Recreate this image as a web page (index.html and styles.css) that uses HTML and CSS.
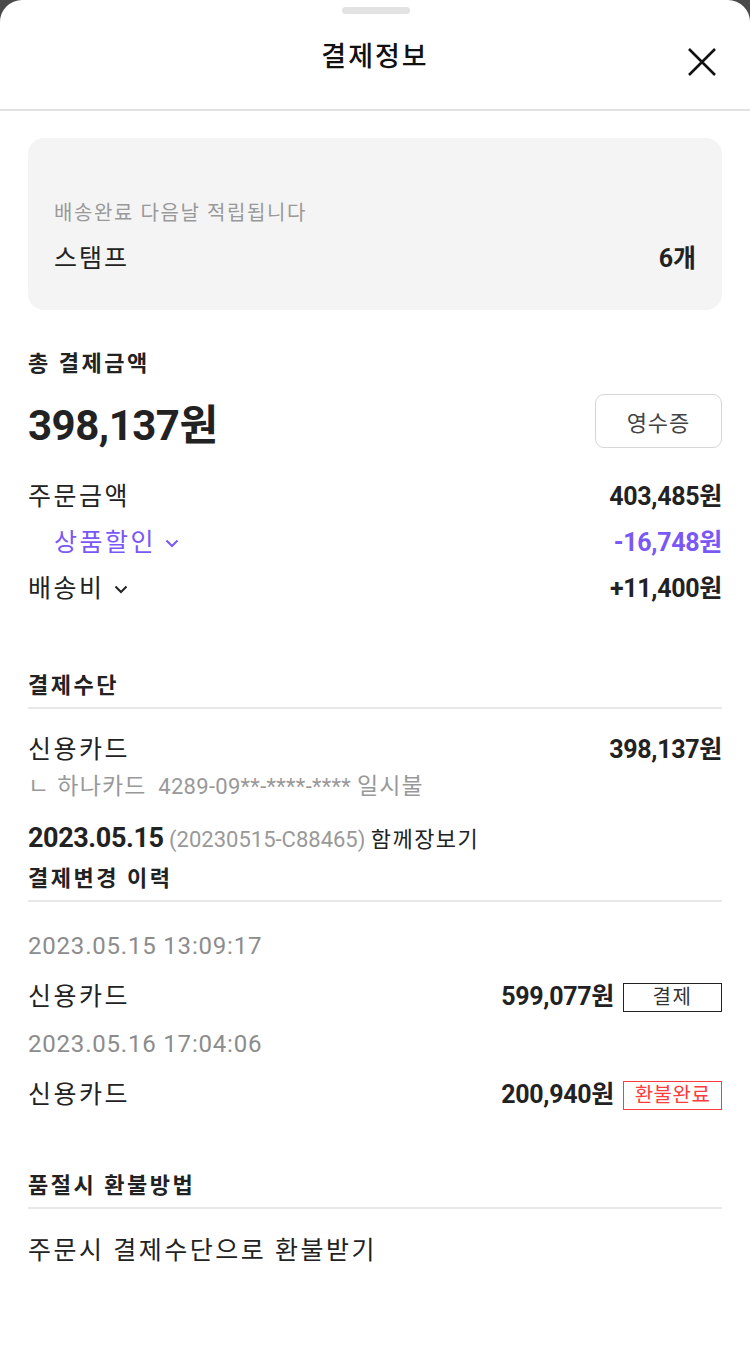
FILE: index.html
```html
<!DOCTYPE html>
<html lang="ko">
<head>
    <meta charset="UTF-8">
    <meta name="viewport" content="width=device-width, initial-scale=1.0">
    <title>결제정보</title>
    <link rel="stylesheet" href="styles.css">
</head>
<body>
    <div class="sheet">
        <div class="header">
            <div class="handle"></div>
            <h1 class="title">결제정보</h1>
            <button class="close" aria-label="닫기">
                <svg width="30" height="30" viewBox="0 0 30 30"><path d="M2 2 L28 28 M28 2 L2 28" stroke="#111" stroke-width="2.6" fill="none"/></svg>
            </button>
        </div>

        <div class="content">
            <div class="stamp-card">
                <p class="stamp-note">배송완료 다음날 적립됩니다</p>
                <div class="stamp-row">
                    <span>스탬프</span>
                    <strong>6개</strong>
                </div>
            </div>

            <h2 class="label">총 결제금액</h2>
            <div class="total-row">
                <span class="total">398,137원</span>
                <button class="receipt">영수증</button>
            </div>

            <div class="row first">
                <span class="name">주문금액</span>
                <strong>403,485원</strong>
            </div>
            <div class="row discount">
                <span class="name">상품할인<svg class="chev" width="14" height="9" viewBox="0 0 14 9"><path d="M1.5 1.5 L7 7 L12.5 1.5" stroke="currentColor" stroke-width="2" fill="none"/></svg></span>
                <strong>-16,748원</strong>
            </div>
            <div class="row">
                <span class="name">배송비<svg class="chev" width="14" height="9" viewBox="0 0 14 9"><path d="M1.5 1.5 L7 7 L12.5 1.5" stroke="currentColor" stroke-width="2" fill="none"/></svg></span>
                <strong>+11,400원</strong>
            </div>

            <h2 class="section-title pay-title">결제수단</h2>
            <div class="row card-row">
                <span class="name">신용카드</span>
                <strong>398,137원</strong>
            </div>
            <p class="card-detail"><span class="ko">ㄴ 하나카드</span>&nbsp; 4289-09**-****-**** <span class="ko">일시불</span></p>
            <p class="order-line"><strong>2023.05.15</strong> <span class="order-no">(20230515-C88465)</span> <span class="order-type">함께장보기</span></p>

            <h2 class="section-title history-title">결제변경 이력</h2>
            <p class="stamp-time">2023.05.15 13:09:17</p>
            <div class="row hist-row">
                <span class="name">신용카드</span>
                <div class="hist-amount">
                    <strong>599,077원</strong>
                    <span class="badge">결제</span>
                </div>
            </div>
            <p class="stamp-time next">2023.05.16 17:04:06</p>
            <div class="row hist-row">
                <span class="name">신용카드</span>
                <div class="hist-amount">
                    <strong>200,940원</strong>
                    <span class="badge refund">환불완료</span>
                </div>
            </div>

            <h2 class="section-title refund-title">품절시 환불방법</h2>
            <p class="refund-way">주문시 결제수단으로 환불받기</p>
        </div>
    </div>
</body>
</html>
```

FILE: styles.css
```css
body {
    margin: 0;
    background-color: #4a4a4a;
    font-family: Roboto, "Noto Sans CJK KR", sans-serif;
    color: #222;
}

.sheet {
    background-color: #fff;
    border-radius: 22px 22px 0 0;
    min-height: 1345px;
}

.header {
    position: relative;
    height: 109px;
    border-bottom: 2px solid #e2e2e2;
    text-align: center;
}

.handle {
    position: absolute;
    top: 7px;
    left: 342px;
    width: 68px;
    height: 7px;
    border-radius: 4px;
    background-color: #e2e2e2;
}

.title {
    margin: 0;
    padding-top: 40px;
    font-size: 27px;
    line-height: 34px;
    letter-spacing: 2px;
    font-weight: 500;
    color: #111;
}

.close {
    position: absolute;
    top: 47px;
    right: 33px;
    padding: 0;
    border: 0;
    background: none;
    width: 30px;
    height: 30px;
}

.content {
    padding: 0 28px;
}

p {
    margin: 0;
}

.stamp-card {
    margin-top: 27px;
    background-color: #f4f4f4;
    border-radius: 16px;
    padding: 62px 26px 35px;
}

.stamp-note {
    font-size: 20px;
    line-height: 26px;
    letter-spacing: 1.6px;
    color: #999;
}

.stamp-row {
    margin-top: 17px;
    display: flex;
    justify-content: space-between;
    font-size: 25px;
    line-height: 32px;
    letter-spacing: 2px;
}

.stamp-row strong {
    font-weight: 700;
    letter-spacing: 0;
}

.label {
    margin: 40px 0 0;
    font-size: 22px;
    line-height: 28px;
    letter-spacing: 2.5px;
    font-weight: 700;
}

.total-row {
    margin-top: 16px;
    display: flex;
    justify-content: space-between;
    align-items: center;
    height: 54px;
}

.total {
    font-size: 42px;
    font-weight: 700;
    letter-spacing: -0.5px;
}

.receipt {
    width: 127px;
    height: 54px;
    border: 1.5px solid #d6d6d6;
    border-radius: 9px;
    background: #fff;
    font-family: inherit;
    font-size: 22px;
    letter-spacing: 1px;
    color: #444;
}

.row {
    margin-top: 14px;
    display: flex;
    justify-content: space-between;
    align-items: center;
    font-size: 25px;
    line-height: 32px;
}

.row .name {
    letter-spacing: 2.5px;
}

.row strong {
    font-size: 25px;
    font-weight: 700;
    letter-spacing: -0.3px;
}

.row.first {
    margin-top: 33px;
}

.chev {
    margin-left: 9px;
    vertical-align: 3px;
}

.discount {
    color: #7a58f6;
    padding-left: 26px;
}

.section-title {
    margin: 0;
    padding-bottom: 7px;
    border-bottom: 2px solid #e8e8e8;
    font-size: 22px;
    line-height: 28px;
    letter-spacing: 2.5px;
    font-weight: 700;
}

.pay-title {
    margin-top: 67px;
}

.card-row {
    margin-top: 25px;
}

.card-detail {
    margin-top: 7px;
    font-size: 22px;
    line-height: 28px;
    letter-spacing: 0.3px;
    color: #999;
}

.card-detail .ko {
    font-size: 23px;
    letter-spacing: 1.2px;
}

.order-line {
    margin-top: 22px;
    font-size: 22px;
    line-height: 30px;
}

.order-line strong {
    font-size: 27px;
    font-weight: 700;
    letter-spacing: -0.4px;
}

.order-no {
    color: #999;
}

.order-type {
    letter-spacing: 1.4px;
}

.history-title {
    margin-top: 10px;
}

.stamp-time {
    margin-top: 29px;
    font-size: 24px;
    line-height: 30px;
    letter-spacing: 0.8px;
    color: #8c8c8c;
}

.stamp-time.next {
    margin-top: 16px;
}

.hist-row {
    margin-top: 20px;
}

.hist-amount {
    display: flex;
    align-items: center;
    gap: 9px;
}

.badge {
    box-sizing: border-box;
    width: 99px;
    height: 29px;
    border: 1.5px solid #222;
    font-size: 20px;
    line-height: 26px;
    letter-spacing: 1.5px;
    text-align: center;
    color: #333;
}

.badge.refund {
    border-color: #ff3b3b;
    color: #ff3b3b;
    letter-spacing: 0.5px;
}

.refund-title {
    margin-top: 61px;
}

.refund-way {
    margin-top: 26px;
    font-size: 25px;
    line-height: 32px;
    letter-spacing: 2.5px;
}
```
